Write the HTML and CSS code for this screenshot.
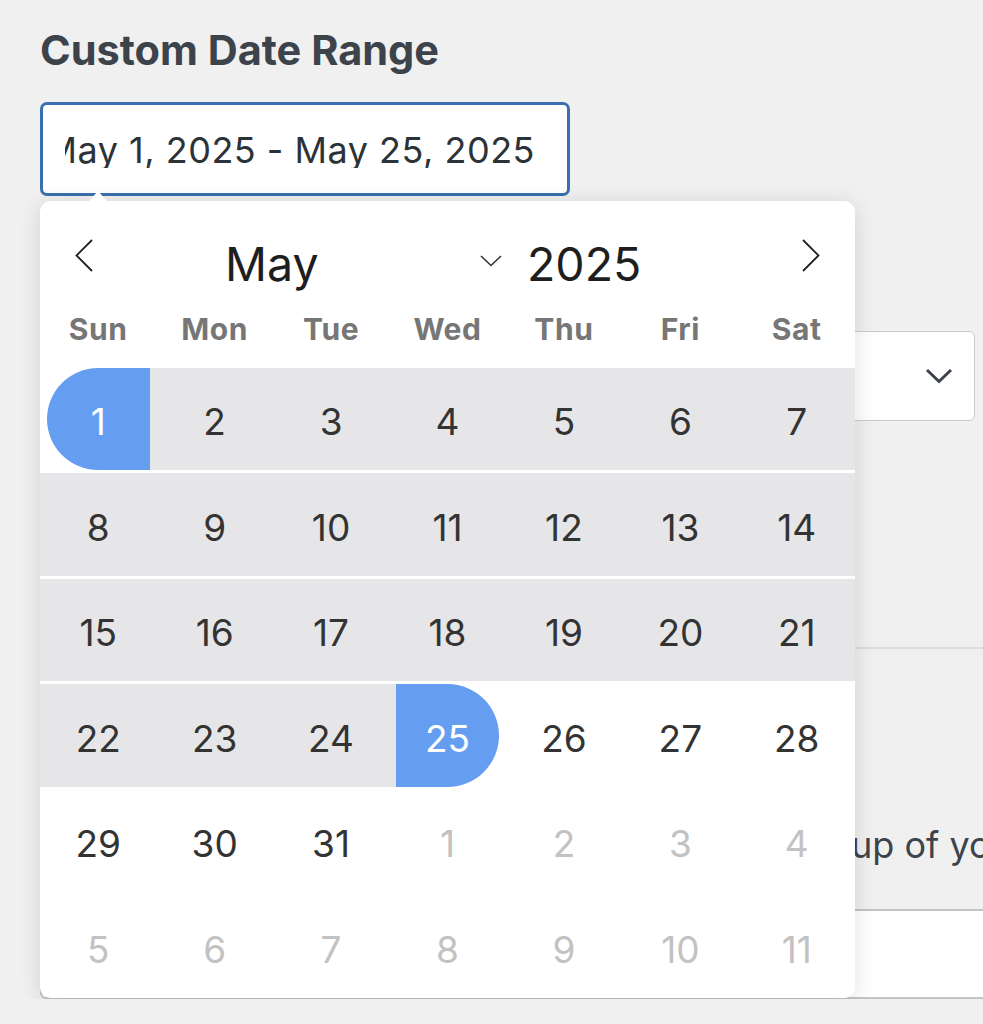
FILE: index.html
```html
<!DOCTYPE html>
<html lang="en">
<head>
  <meta charset="UTF-8" />
  <meta name="viewport" content="width=device-width, initial-scale=1.0" />
  <title>Custom Date Range</title>
  <link rel="stylesheet" href="styles.css">
</head>
<body>
  <div class="page">
    <h2 class="section-title">Custom Date Range</h2>

    <div class="date-field">
      <div class="date-input">
        <span class="date-value"><span>May 1, 2025 - May 25, 2025</span></span>
      </div>

      <div class="datepicker">
        <div class="dp-header">
          <svg class="dp-nav" width="18" height="33" viewBox="0 0 18 33"><path d="M17 1 L1.5 16.5 L17 32" fill="none" stroke="#222" stroke-width="1.8"/></svg>
          <div class="dp-month">
            <span>May</span>
            <svg class="dp-caret" width="22" height="12" viewBox="0 0 22 12"><path d="M1 1 L11 10.5 L21 1" fill="none" stroke="#333" stroke-width="1.6"/></svg>
          </div>
          <div class="dp-year">2025</div>
          <svg class="dp-nav dp-next" width="18" height="33" viewBox="0 0 18 33"><path d="M1 1 L16.5 16.5 L1 32" fill="none" stroke="#222" stroke-width="1.8"/></svg>
        </div>

        <div class="dp-weekdays">
          <span>Sun</span><span>Mon</span><span>Tue</span><span>Wed</span><span>Thu</span><span>Fri</span><span>Sat</span>
        </div>

        <div class="dp-days">
          <div class="day range-start"><span class="day-dot">1</span></div>
          <div class="day in-range">2</div>
          <div class="day in-range">3</div>
          <div class="day in-range">4</div>
          <div class="day in-range">5</div>
          <div class="day in-range">6</div>
          <div class="day in-range">7</div>

          <div class="day in-range">8</div>
          <div class="day in-range">9</div>
          <div class="day in-range">10</div>
          <div class="day in-range">11</div>
          <div class="day in-range">12</div>
          <div class="day in-range">13</div>
          <div class="day in-range">14</div>

          <div class="day in-range">15</div>
          <div class="day in-range">16</div>
          <div class="day in-range">17</div>
          <div class="day in-range">18</div>
          <div class="day in-range">19</div>
          <div class="day in-range">20</div>
          <div class="day in-range">21</div>

          <div class="day in-range">22</div>
          <div class="day in-range">23</div>
          <div class="day in-range">24</div>
          <div class="day range-end"><span class="day-dot">25</span></div>
          <div class="day">26</div>
          <div class="day">27</div>
          <div class="day">28</div>

          <div class="day">29</div>
          <div class="day">30</div>
          <div class="day">31</div>
          <div class="day muted">1</div>
          <div class="day muted">2</div>
          <div class="day muted">3</div>
          <div class="day muted">4</div>

          <div class="day muted">5</div>
          <div class="day muted">6</div>
          <div class="day muted">7</div>
          <div class="day muted">8</div>
          <div class="day muted">9</div>
          <div class="day muted">10</div>
          <div class="day muted">11</div>
        </div>
      </div>
    </div>

    <div class="select-box">
      <svg class="select-caret" width="28" height="16" viewBox="0 0 28 16"><path d="M2 2 L14 13.5 L26 2" fill="none" stroke="#3c434a" stroke-width="3"/></svg>
    </div>

    <hr class="divider">

    <p class="hint"><span class="hint-lead">Each row shows the total for a gro</span><span>up of your posts in the selected range.</span></p>

    <div class="text-box"></div>
  </div>
</body>
</html>
```

FILE: styles.css
```css
body {
  margin: 0;
  background-color: #f0f0f1;
  font-family: Inter, "Liberation Sans", sans-serif;
  color: #3c434a;
  overflow: hidden;
}
.page {
  padding: 30px 0 0 40px;
}
.section-title {
  margin: 0;
  font-size: 41.5px;
  line-height: 1;
  font-weight: 700;
  color: #3c434a;
}

/* date input + popup */
.date-field {
  position: relative;
  width: 530px;
  margin-top: 30px;
}
.date-input {
  box-sizing: border-box;
  height: 94px;
  padding: 3px 32px 0 22px;
  display: flex;
  align-items: center;
  background: #fff;
  border: 3px solid #3a70ad;
  border-radius: 7px;
}
.date-value {
  flex: 1;
  display: flex;
  justify-content: flex-end;
  overflow: hidden;
  white-space: nowrap;
  font-size: 36px;
  letter-spacing: 0.5px;
  line-height: 1;
  color: #2c3338;
}
.datepicker {
  position: absolute;
  top: 99px;
  left: 0;
  width: 815px;
  background: #fff;
  border-radius: 11px;
  box-shadow: 0 3px 22px rgba(0, 0, 0, 0.13);
  z-index: 2;
}
.datepicker::before {
  content: "";
  position: absolute;
  top: -10px;
  left: 49px;
  border-left: 9px solid transparent;
  border-right: 9px solid transparent;
  border-bottom: 10px solid #fff;
}
.dp-header {
  height: 113px;
  box-sizing: border-box;
  padding: 38px 35px 0;
  display: flex;
  align-items: flex-start;
  color: #1e1e1e;
  font-size: 46.5px;
  line-height: 1;
}
.dp-month {
  width: 277px;
  margin-left: 132px;
  display: flex;
  justify-content: space-between;
  padding-top: 2px;
}
.dp-caret {
  margin-top: 14px;
}
.dp-year {
  margin-left: 25px;
  padding-top: 2px;
}
.dp-next {
  margin-left: auto;
}
.dp-weekdays {
  height: 54px;
  display: grid;
  grid-template-columns: repeat(7, 1fr);
  text-align: center;
  font-size: 30px;
  font-weight: 700;
  letter-spacing: 0.6px;
  line-height: 1;
  color: #767676;
}
.dp-days {
  display: grid;
  grid-template-columns: repeat(7, 1fr);
  row-gap: 3px;
}
.day {
  box-sizing: border-box;
  height: 102.5px;
  padding-top: 6px;
  display: flex;
  align-items: center;
  justify-content: center;
  font-size: 37px;
  color: #333;
}
.day.in-range {
  background: #e6e6e8;
}
.day.range-start {
  background: linear-gradient(to right, transparent 50%, #e6e6e8 50%);
}
.day.range-end {
  background: linear-gradient(to left, transparent 50%, #e6e6e8 50%);
}
.day.range-start,
.day.range-end {
  padding-top: 0;
}
.day.muted {
  color: #c2c2c2;
}
.day-dot {
  box-sizing: border-box;
  width: 103px;
  height: 100%;
  padding-top: 6px;
  display: flex;
  align-items: center;
  justify-content: center;
  background: #659ef1;
  color: #fff;
}
.range-start .day-dot {
  border-radius: 52px 0 0 52px;
}
.range-end .day-dot {
  border-radius: 0 52px 52px 0;
}

/* form content behind the popup */
.select-box {
  box-sizing: border-box;
  width: 935px;
  height: 90px;
  margin-top: 135px;
  padding-right: 21px;
  display: flex;
  align-items: center;
  justify-content: flex-end;
  background: #fff;
  border: 1px solid #c9cacd;
  border-radius: 6px;
}
.divider {
  margin: 226px 0 0;
  border: 0;
  border-top: 2px solid #dcdcde;
}
.hint {
  display: flex;
  margin: 178px 0 0;
  font-size: 36px;
  line-height: 1;
  white-space: nowrap;
  color: #3c434a;
}
.hint-lead {
  width: 811px;
  flex-shrink: 0;
  text-align: right;
  visibility: hidden;
}
.text-box {
  width: 1000px;
  height: 90px;
  box-sizing: border-box;
  margin-top: 46px;
  background: #fff;
  border: 2px solid #c3c4c7;
  border-radius: 6px;
}
```
